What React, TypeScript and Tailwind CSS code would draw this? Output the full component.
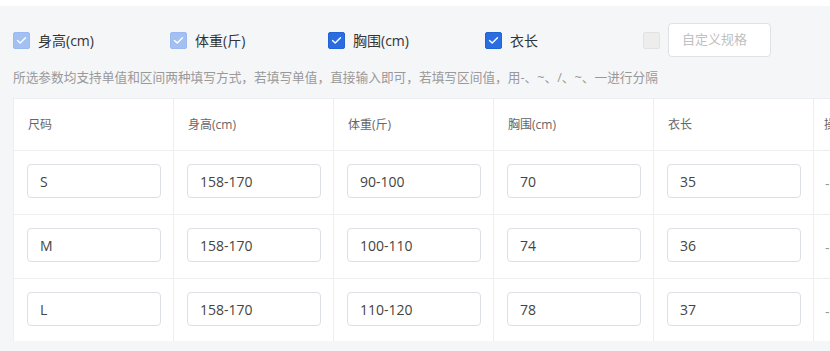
import React from "react";

const font = { fontFamily: '"Open Sans", "Noto Sans CJK SC", sans-serif' };

function Check({ state }: { state: "dis-checked" | "checked" | "dis" }) {
  if (state === "dis") {
    return <span className="block w-[17px] h-[17px] rounded-[2px] bg-[#ededed] border border-[#e2e2e2]" />;
  }
  const bg = state === "checked" ? "bg-[#2a6de0] border-[#2363d6]" : "bg-[#a3c0f3] border-[#9ab9f0]";
  return (
    <span className={`flex items-center justify-center w-[17px] h-[17px] rounded-[2px] border ${bg}`}>
      <svg width="11" height="9" viewBox="0 0 11 9" fill="none">
        <path d="M1.5 4.6 L4.2 7 L9.5 1.8" stroke="white" strokeWidth="1.4" strokeLinecap="round" strokeLinejoin="round" />
      </svg>
    </span>
  );
}

const rows = [
  ["S", "158-170", "90-100", "70", "35"],
  ["M", "158-170", "100-110", "74", "36"],
  ["L", "158-170", "110-120", "78", "37"],
];
const headers = ["尺码", "身高(cm)", "体重(斤)", "胸围(cm)", "衣长"];

export default function App() {
  return (
    <div className="w-[830px] h-[351px] overflow-hidden bg-[#f5f6f8]" style={font}>
      <div className="h-[6px] bg-white" />
      <div className="pl-[13px]">
        <div className="flex items-center h-[34px] mt-[17px] text-[14px] text-[#333]">
          <div className="w-[157px] flex items-center gap-[8px]">
            <Check state="dis-checked" />
            <span>身高(cm)</span>
          </div>
          <div className="w-[158px] flex items-center gap-[8px]">
            <Check state="dis-checked" />
            <span>体重(斤)</span>
          </div>
          <div className="w-[157px] flex items-center gap-[8px]">
            <Check state="checked" />
            <span>胸围(cm)</span>
          </div>
          <div className="w-[158px] flex items-center gap-[8px]">
            <Check state="checked" />
            <span>衣长</span>
          </div>
          <div className="flex items-center gap-[8px]">
            <Check state="dis" />
            <div className="w-[103px] h-[34px] rounded-[4px] border border-[#dfe1e6] bg-white flex items-center pl-[13px] text-[13px] text-[#c0c0c0]">
              自定义规格
            </div>
          </div>
        </div>
        <div className="mt-[10px] text-[12.7px] leading-[20px] text-[#999] whitespace-nowrap">
          所选参数均支持单值和区间两种填写方式，若填写单值，直接输入即可，若填写区间值，用-、~、/、~、一进行分隔
        </div>
        <div className="mt-[11px] bg-white border-l border-t border-[#eceef2] h-[243px] overflow-hidden">
          <div className="flex h-[52px] border-b border-[#eceef2]">
            {headers.map((h, i) => (
              <div
                key={i}
                className="w-[160px] shrink-0 border-r border-[#eceef2] flex items-center pl-[14px] text-[12px] text-[#666]"
              >
                {h}
              </div>
            ))}
            <div className="w-[160px] shrink-0 flex items-center pl-[10px] text-[12px] text-[#666]">操作</div>
          </div>
          {rows.map((r, ri) => (
            <div key={ri} className={`flex h-[64px] ${ri < 2 ? "border-b border-[#eceef2]" : ""}`}>
              {r.map((v, ci) => (
                <div key={ci} className="w-[160px] shrink-0 border-r border-[#eceef2] flex items-start pt-[13px] pl-[13px]">
                  <div className="w-[134px] h-[34px] rounded-[4px] border border-[#dcdfe6] flex items-center pl-[12px] text-[14px] text-[#444]">
                    {v}
                  </div>
                </div>
              ))}
              <div className="w-[160px] shrink-0 flex items-start pt-[22px] pl-[11px] text-[14px] text-[#999]">-</div>
            </div>
          ))}
        </div>
      </div>
    </div>
  );
}
